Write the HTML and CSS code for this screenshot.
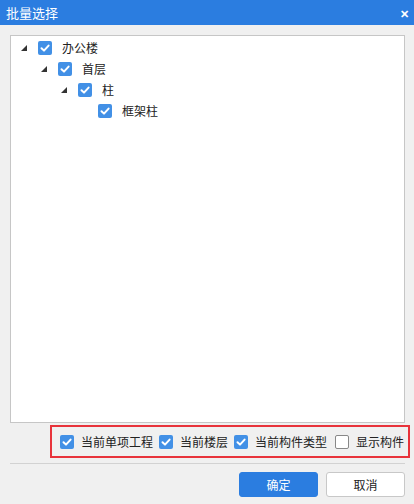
FILE: index.html
```html
<!DOCTYPE html>
<html>
<head>
    <meta charset="UTF-8">
    <title>批量选择</title>
    <link rel="stylesheet" href="styles.css">
</head>
<body>
    <div id="dialog">
        <div class="titlebar">
            <span class="title">批量选择</span>
            <span class="close">&#x2715;</span>
        </div>
        <div class="content">
            <div class="tree">
                <div class="node lvl0">
                    <svg class="arrow" width="6" height="6" viewBox="0 0 6 6"><polygon points="6,0 6,6 0,6" /></svg>
                    <svg class="check" width="14" height="14" viewBox="0 0 14 14"><rect width="14" height="14" rx="2" /><path d="M3.5 7.2 L6 9.6 L10.6 4.6" /></svg>
                    <span>办公楼</span>
                </div>
                <div class="node lvl1">
                    <svg class="arrow" width="6" height="6" viewBox="0 0 6 6"><polygon points="6,0 6,6 0,6" /></svg>
                    <svg class="check" width="14" height="14" viewBox="0 0 14 14"><rect width="14" height="14" rx="2" /><path d="M3.5 7.2 L6 9.6 L10.6 4.6" /></svg>
                    <span>首层</span>
                </div>
                <div class="node lvl2">
                    <svg class="arrow" width="6" height="6" viewBox="0 0 6 6"><polygon points="6,0 6,6 0,6" /></svg>
                    <svg class="check" width="14" height="14" viewBox="0 0 14 14"><rect width="14" height="14" rx="2" /><path d="M3.5 7.2 L6 9.6 L10.6 4.6" /></svg>
                    <span>柱</span>
                </div>
                <div class="node lvl3">
                    <span class="arrow-blank"></span>
                    <svg class="check" width="14" height="14" viewBox="0 0 14 14"><rect width="14" height="14" rx="2" /><path d="M3.5 7.2 L6 9.6 L10.6 4.6" /></svg>
                    <span>框架柱</span>
                </div>
            </div>
            <div class="options">
                <label class="opt">
                    <svg class="check" width="14" height="14" viewBox="0 0 14 14"><rect width="14" height="14" rx="2" /><path d="M3.5 7.2 L6 9.6 L10.6 4.6" /></svg>
                    <span>当前单项工程</span>
                </label>
                <label class="opt">
                    <svg class="check" width="14" height="14" viewBox="0 0 14 14"><rect width="14" height="14" rx="2" /><path d="M3.5 7.2 L6 9.6 L10.6 4.6" /></svg>
                    <span>当前楼层</span>
                </label>
                <label class="opt">
                    <svg class="check" width="14" height="14" viewBox="0 0 14 14"><rect width="14" height="14" rx="2" /><path d="M3.5 7.2 L6 9.6 L10.6 4.6" /></svg>
                    <span>当前构件类型</span>
                </label>
                <label class="opt last">
                    <span class="box"></span>
                    <span>显示构件</span>
                </label>
            </div>
            <div class="separator"></div>
            <div class="buttons">
                <button class="btn primary">确定</button>
                <button class="btn">取消</button>
            </div>
        </div>
    </div>
</body>
</html>
```

FILE: styles.css
```css
body {
    margin: 0;
    background-color: #f0f0f0;
    font-family: "Noto Sans CJK SC", "Noto Sans", sans-serif;
    font-size: 12px;
    color: #222;
}
#dialog {
    width: 414px;
    height: 504px;
    background-color: #f0f0f0;
}
.titlebar {
    height: 25px;
    background-color: #2b7de0;
    color: #fff;
    display: flex;
    justify-content: space-between;
    align-items: center;
    padding: 0 5px 0 6px;
}
.title {
    font-size: 13px;
}
.close {
    font-size: 11px;
    font-weight: bold;
}
.content {
    padding: 10px 9px 0 10px;
}
.tree {
    height: 385px;
    background-color: #fff;
    border: 1px solid #c6c6c6;
    padding-top: 1px;
}
.node {
    height: 21px;
    display: flex;
    align-items: center;
}
.lvl0 { padding-left: 10px; }
.lvl1 { padding-left: 30px; }
.lvl2 { padding-left: 50px; }
.lvl3 { padding-left: 70px; }
.arrow {
    fill: #333;
    margin-right: 11px;
}
.arrow-blank {
    width: 6px;
    margin-right: 11px;
}
.check rect {
    fill: #4290e6;
}
.check path {
    fill: none;
    stroke: #fff;
    stroke-width: 2;
    stroke-linecap: round;
    stroke-linejoin: round;
}
.node .check {
    margin-right: 10px;
}
.options {
    margin: 2px -5px 0 40px;
    height: 29px;
    border: 2px solid #e8333b;
    display: flex;
    align-items: center;
    padding-left: 8px;
    white-space: nowrap;
    overflow: hidden;
}
.opt {
    display: flex;
    align-items: center;
    flex-shrink: 0;
    margin-right: 6px;
}
.opt.last {
    margin-left: 2px;
    margin-right: 0;
}
.opt .check {
    margin-right: 7px;
    flex-shrink: 0;
}
.box {
    width: 12px;
    height: 12px;
    border: 1px solid #888;
    border-radius: 2px;
    background-color: #fff;
    margin-right: 7px;
    flex-shrink: 0;
}
.separator {
    height: 1px;
    background-color: #d2d2d2;
    margin-top: 5px;
}
.buttons {
    display: flex;
    justify-content: flex-end;
    gap: 8px;
    margin-top: 8px;
}
.btn {
    width: 79px;
    height: 25px;
    border: 1px solid #c8c8c8;
    border-radius: 3px;
    background-color: #fff;
    font-family: inherit;
    font-size: 12px;
    color: #222;
    padding: 0;
}
.btn.primary {
    background-color: #2b7de0;
    border-color: #2b7de0;
    color: #fff;
}
```
